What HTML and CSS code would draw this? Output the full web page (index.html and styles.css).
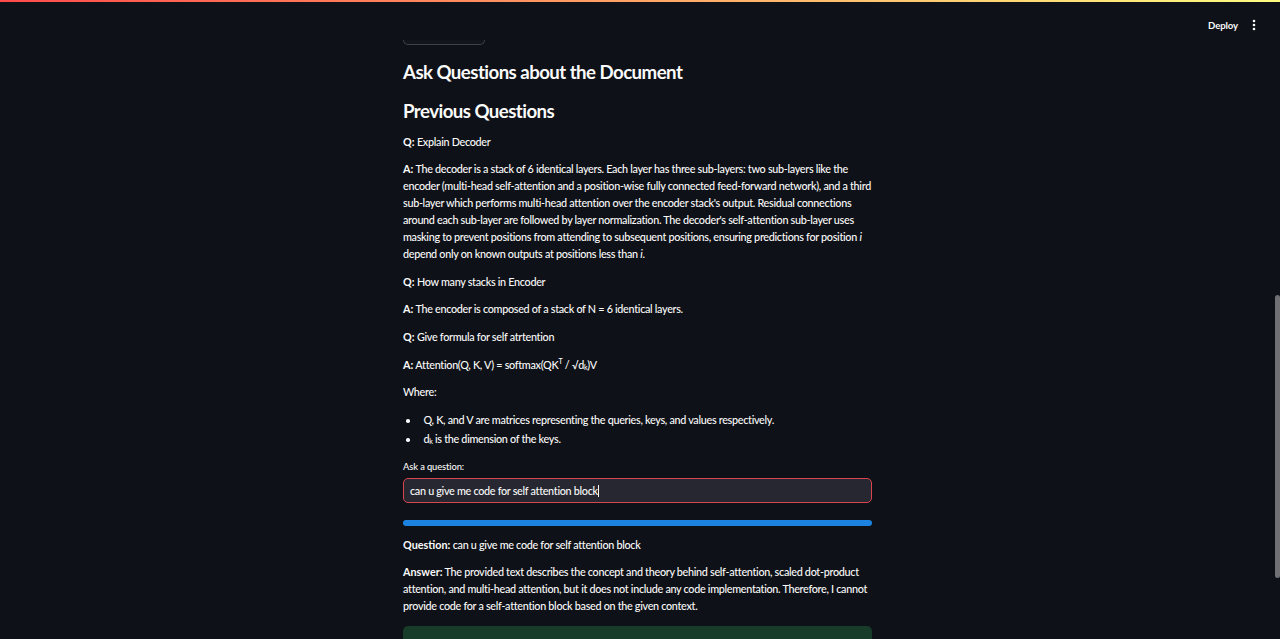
FILE: index.html
```html
<!DOCTYPE html>
<html lang="en">
<head>
<meta charset="utf-8">
<title>Ask Questions about the Document</title>
<link rel="stylesheet" href="styles.css">
</head>
<body>
<div class="app">
  <header class="topbar">
    <div class="decoration"></div>
    <div class="toolbar">
      <span class="deploy">Deploy</span>
      <svg class="kebab" width="4" height="12" viewBox="0 0 4 12" aria-hidden="true">
        <circle cx="2" cy="2" r="1.3" fill="#fafafa"/>
        <circle cx="2" cy="6" r="1.3" fill="#fafafa"/>
        <circle cx="2" cy="10" r="1.3" fill="#fafafa"/>
      </svg>
    </div>
  </header>
  <div class="viewport">
    <main class="main">
      <div class="block">
        <div class="btn-stub"></div>
        <h3 class="title">Ask Questions about the Document</h3>
        <h3 class="subtitle">Previous Questions</h3>
        <p class="para first"><strong>Q:</strong> Explain Decoder</p>
        <p class="para"><strong>A:</strong> The decoder is a stack of 6 identical layers. Each layer has three sub-layers: two sub-layers like the encoder (multi-head self-attention and a position-wise fully connected feed-forward network), and a third sub-layer which performs multi-head attention over the encoder stack's output. Residual connections around each sub-layer are followed by layer normalization. The decoder's self-attention sub-layer uses masking to prevent positions from attending to subsequent positions, ensuring predictions for position <em>i</em> depend only on known outputs at positions less than <em>i</em>.</p>
        <p class="para"><strong>Q:</strong> How many stacks in Encoder</p>
        <p class="para"><strong>A:</strong> The encoder is composed of a stack of N = 6 identical layers.</p>
        <p class="para"><strong>Q:</strong> Give formula for self atrtention</p>
        <p class="para"><strong>A:</strong> Attention(Q, K, V) = softmax(QK<sup>T</sup> / √d<sub>k</sub>)V</p>
        <p class="para">Where:</p>
        <ul class="list">
          <li>Q, K, and V are matrices representing the queries, keys, and values respectively.</li>
          <li>d<sub>k</sub> is the dimension of the keys.</li>
        </ul>
        <label class="label" for="q">Ask a question:</label>
        <div class="input" id="q"><span class="input-text">can u give me code for self attention block</span><span class="caret"></span></div>
        <div class="progress"></div>
        <p class="para"><strong>Question:</strong> can u give me code for self attention block</p>
        <p class="para"><strong>Answer:</strong> The provided text describes the concept and theory behind self-attention, scaled dot-product attention, and multi-head attention, but it does not include any code implementation. Therefore, I cannot provide code for a self-attention block based on the given context.</p>
        <div class="success"></div>
      </div>
    </main>
    <div class="scrollbar"><div class="thumb"></div></div>
  </div>
</div>
</body>
</html>
```
FILE: styles.css
```css
html, body {
  margin: 0;
  padding: 0;
  height: 100%;
  background: #0e1117;
  overflow: hidden;
}
body {
  color: #fafafa;
  font-family: "Lato", "Noto Sans", sans-serif;
  font-size: 10.8px;
}
.app {
  display: flex;
  flex-direction: column;
  height: 100%;
}
.topbar {
  height: 40px;
  flex: none;
  display: flex;
  flex-direction: column;
  background: #0e1117;
}
.decoration {
  height: 2px;
  background: linear-gradient(90deg, #ff4b4b, #fffd80);
}
.toolbar {
  flex: 1;
  display: flex;
  align-items: center;
  justify-content: flex-end;
  padding: 8px 24px 0 0;
  gap: 14px;
}
.deploy {
  font-size: 9.6px;
  font-weight: 700;
  letter-spacing: -0.1px;
}
.kebab { display: block; }
.viewport {
  flex: 1;
  display: flex;
  min-height: 0;
}
.main {
  flex: 1;
  display: flex;
  justify-content: center;
  overflow: hidden;
}
.block {
  width: 469px;
  display: flex;
  flex-direction: column;
}
.block > * { flex-shrink: 0; }
.btn-stub {
  width: 82px;
  height: 5px;
  box-sizing: border-box;
  border: 1px solid rgba(250, 250, 250, 0.2);
  border-top: none;
  border-radius: 0 0 5px 5px;
  background: #12151c;
}
h3 {
  margin: 0;
  font-size: 18.67px;
  line-height: 22px;
  font-weight: 700;
  letter-spacing: -0.55px;
}
.title { margin-top: 16px; }
.subtitle { margin-top: 17px; }
.para {
  margin: 10.67px 0 0;
  line-height: 17px;
  letter-spacing: -0.3px;
  font-weight: 500;
}
.para.first { margin-top: 10.5px; }
strong { font-weight: 700; letter-spacing: 0; }
sup, sub {
  font-size: 7px;
  line-height: 0;
}
sub { vertical-align: -1px; }
.list {
  margin: 10.67px 0 0;
  padding-left: 0;
  list-style: none;
  line-height: 17px;
  letter-spacing: -0.3px;
  font-weight: 500;
}
.list li::before {
  content: "";
  display: inline-block;
  vertical-align: middle;
  width: 3.5px;
  height: 3.5px;
  border-radius: 50%;
  background: #fafafa;
  margin: -1px 14px 0 3px;
}
.list li + li { margin-top: 2px; }
.label {
  margin-top: 12px;
  font-size: 9.33px;
  line-height: 16px;
  font-weight: 500;
  letter-spacing: -0.1px;
}
.input {
  margin-top: 3px;
  height: 25px;
  box-sizing: border-box;
  background: #262730;
  border: 1px solid #d9444f;
  border-radius: 5px;
  display: flex;
  align-items: center;
  padding-left: 6px;
  letter-spacing: -0.3px;
  font-weight: 500;
}
.caret {
  width: 1px;
  height: 12px;
  background: #fafafa;
}
.progress {
  margin-top: 17px;
  height: 5.5px;
  border-radius: 3px;
  background: #1c83e1;
}
.progress + .para { margin-top: 10px; }
.success {
  margin-top: 11.5px;
  height: 40px;
  border-radius: 5px;
  background: #173c29;
}
.scrollbar {
  width: 5px;
  flex: none;
  padding-top: 255px;
}
.thumb {
  height: 283px;
  background: #6f7074;
  border-radius: 3px;
}
```
